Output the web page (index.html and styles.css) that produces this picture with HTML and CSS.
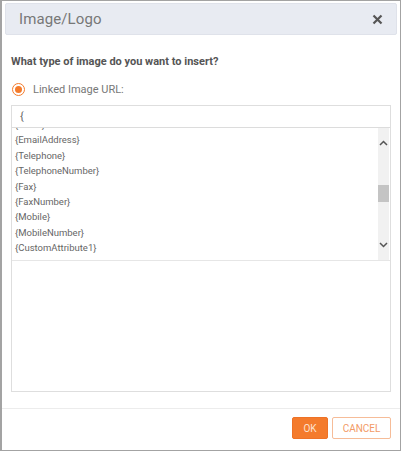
FILE: index.html
```html
<!DOCTYPE html>
<html>
<head>
<meta charset="utf-8">
<link rel="stylesheet" href="styles.css">
</head>
<body>
<div class="dialog">
  <div class="header">
    <span class="title">Image/Logo</span>
    <svg class="close" width="11" height="11" viewBox="0 0 11 11"><path d="M1.5 1.5 L9.5 9.5 M9.5 1.5 L1.5 9.5" stroke="#555" stroke-width="2.2" stroke-linecap="butt"/></svg>
  </div>
  <div class="body">
    <div class="question">What type of image do you want to insert?</div>
    <label class="radio-row">
      <span class="radio"><span class="dot"></span></span>
      <span class="radio-label">Linked Image URL:</span>
    </label>
    <div class="field">
      <div class="input">{</div>
      <div class="list">
        <div class="items">
          <div class="item">{Email}</div>
          <div class="item">{EmailAddress}</div>
          <div class="item">{Telephone}</div>
          <div class="item">{TelephoneNumber}</div>
          <div class="item">{Fax}</div>
          <div class="item">{FaxNumber}</div>
          <div class="item">{Mobile}</div>
          <div class="item">{MobileNumber}</div>
          <div class="item">{CustomAttribute1}</div>
          <div class="item">{CustomAttribute2}</div>
        </div>
        <div class="scrollbar">
          <svg class="arrow up" width="9" height="6" viewBox="0 0 9 6"><path d="M1 5 L4.5 1.5 L8 5" fill="none" stroke="#555" stroke-width="1.5"/></svg>
          <div class="thumb"></div>
          <svg class="arrow down" width="9" height="6" viewBox="0 0 9 6"><path d="M1 1 L4.5 4.5 L8 1" fill="none" stroke="#555" stroke-width="1.5"/></svg>
        </div>
      </div>
    </div>
  </div>
  <div class="footer">
    <button class="btn ok">OK</button>
    <button class="btn cancel">CANCEL</button>
  </div>
</div>
</body>
</html>
```

FILE: styles.css
```css
* { box-sizing: border-box; }
html, body { margin: 0; padding: 0; background: #fff; }
body { font-family: Roboto, "Liberation Sans", Arial, sans-serif; }

.dialog {
  width: 401px;
  height: 451px;
  border: 1px solid #a3a3a3;
  border-left-width: 2px;
  display: flex;
  flex-direction: column;
  padding: 2px 3px 0 3px;
}

.header {
  height: 32px;
  background: #e8ebf2;
  border: 1px solid #dfe2ea;
  border-radius: 2px;
  display: flex;
  align-items: center;
  justify-content: space-between;
  padding: 0 13px 0 13px;
}
.title {
  font-size: 15px;
  color: #777;
  letter-spacing: 0.1px;
}
.close { display: block; }

.body {
  flex: 1;
  padding: 20px 6px 0 6px;
  display: flex;
  flex-direction: column;
}
.question {
  font-size: 11px;
  font-weight: 700;
  color: #555;
  line-height: 14px;
}
.radio-row {
  display: flex;
  align-items: center;
  margin-top: 13px;
  height: 14px;
}
.radio {
  width: 13px;
  height: 13px;
  border: 1.5px solid #f47b2c;
  border-radius: 50%;
  display: flex;
  align-items: center;
  justify-content: center;
  margin-left: 1px;
}
.dot {
  width: 7px;
  height: 7px;
  border-radius: 50%;
  background: #f47b2c;
}
.radio-label {
  margin-left: 8px;
  font-size: 11px;
  color: #777;
}

.field {
  margin-top: 9px;
  height: 287px;
  border: 1px solid #dedede;
  display: flex;
  flex-direction: column;
}
.input {
  height: 22px;
  border-bottom: 1px solid #dcdcdc;
  font-size: 11px;
  color: #666;
  line-height: 21px;
  padding-left: 8px;
}
.list {
  height: 133px;
  border-bottom: 1px solid #e6e6e6;
  display: flex;
  overflow: hidden;
  position: relative;
}
.items {
  flex: 1;
  margin-top: -11px;
}
.item {
  height: 15.4px;
  line-height: 15.4px;
  font-size: 9.5px;
  color: #666;
  padding-left: 3px;
}
.scrollbar {
  width: 11px;
  background: #f1f1f1;
  margin-right: 1px;
  position: relative;
}
.arrow { position: absolute; left: 1px; }
.arrow.up { top: 12px; }
.arrow.down { top: 114px; }
.thumb {
  position: absolute;
  left: 0;
  top: 57px;
  width: 11px;
  height: 17px;
  background: #c4c4c4;
}

.footer {
  height: 42px;
  margin: 0 -3px;
  border-top: 1px solid #ececec;
  display: flex;
  justify-content: flex-end;
  align-items: center;
  gap: 4px;
  padding: 0 9px 3px 0;
}
.btn {
  height: 22px;
  font-family: Roboto, "Liberation Sans", Arial, sans-serif;
  font-size: 10px;
  border-radius: 2px;
  padding: 0;
  cursor: pointer;
}
.ok {
  width: 36px;
  background: #f47b2c;
  border: 1px solid #ee7226;
  color: #fde2d0;
}
.cancel {
  width: 59px;
  background: #fff;
  border: 1px solid #f6bc98;
  color: #f29a66;
}
```
